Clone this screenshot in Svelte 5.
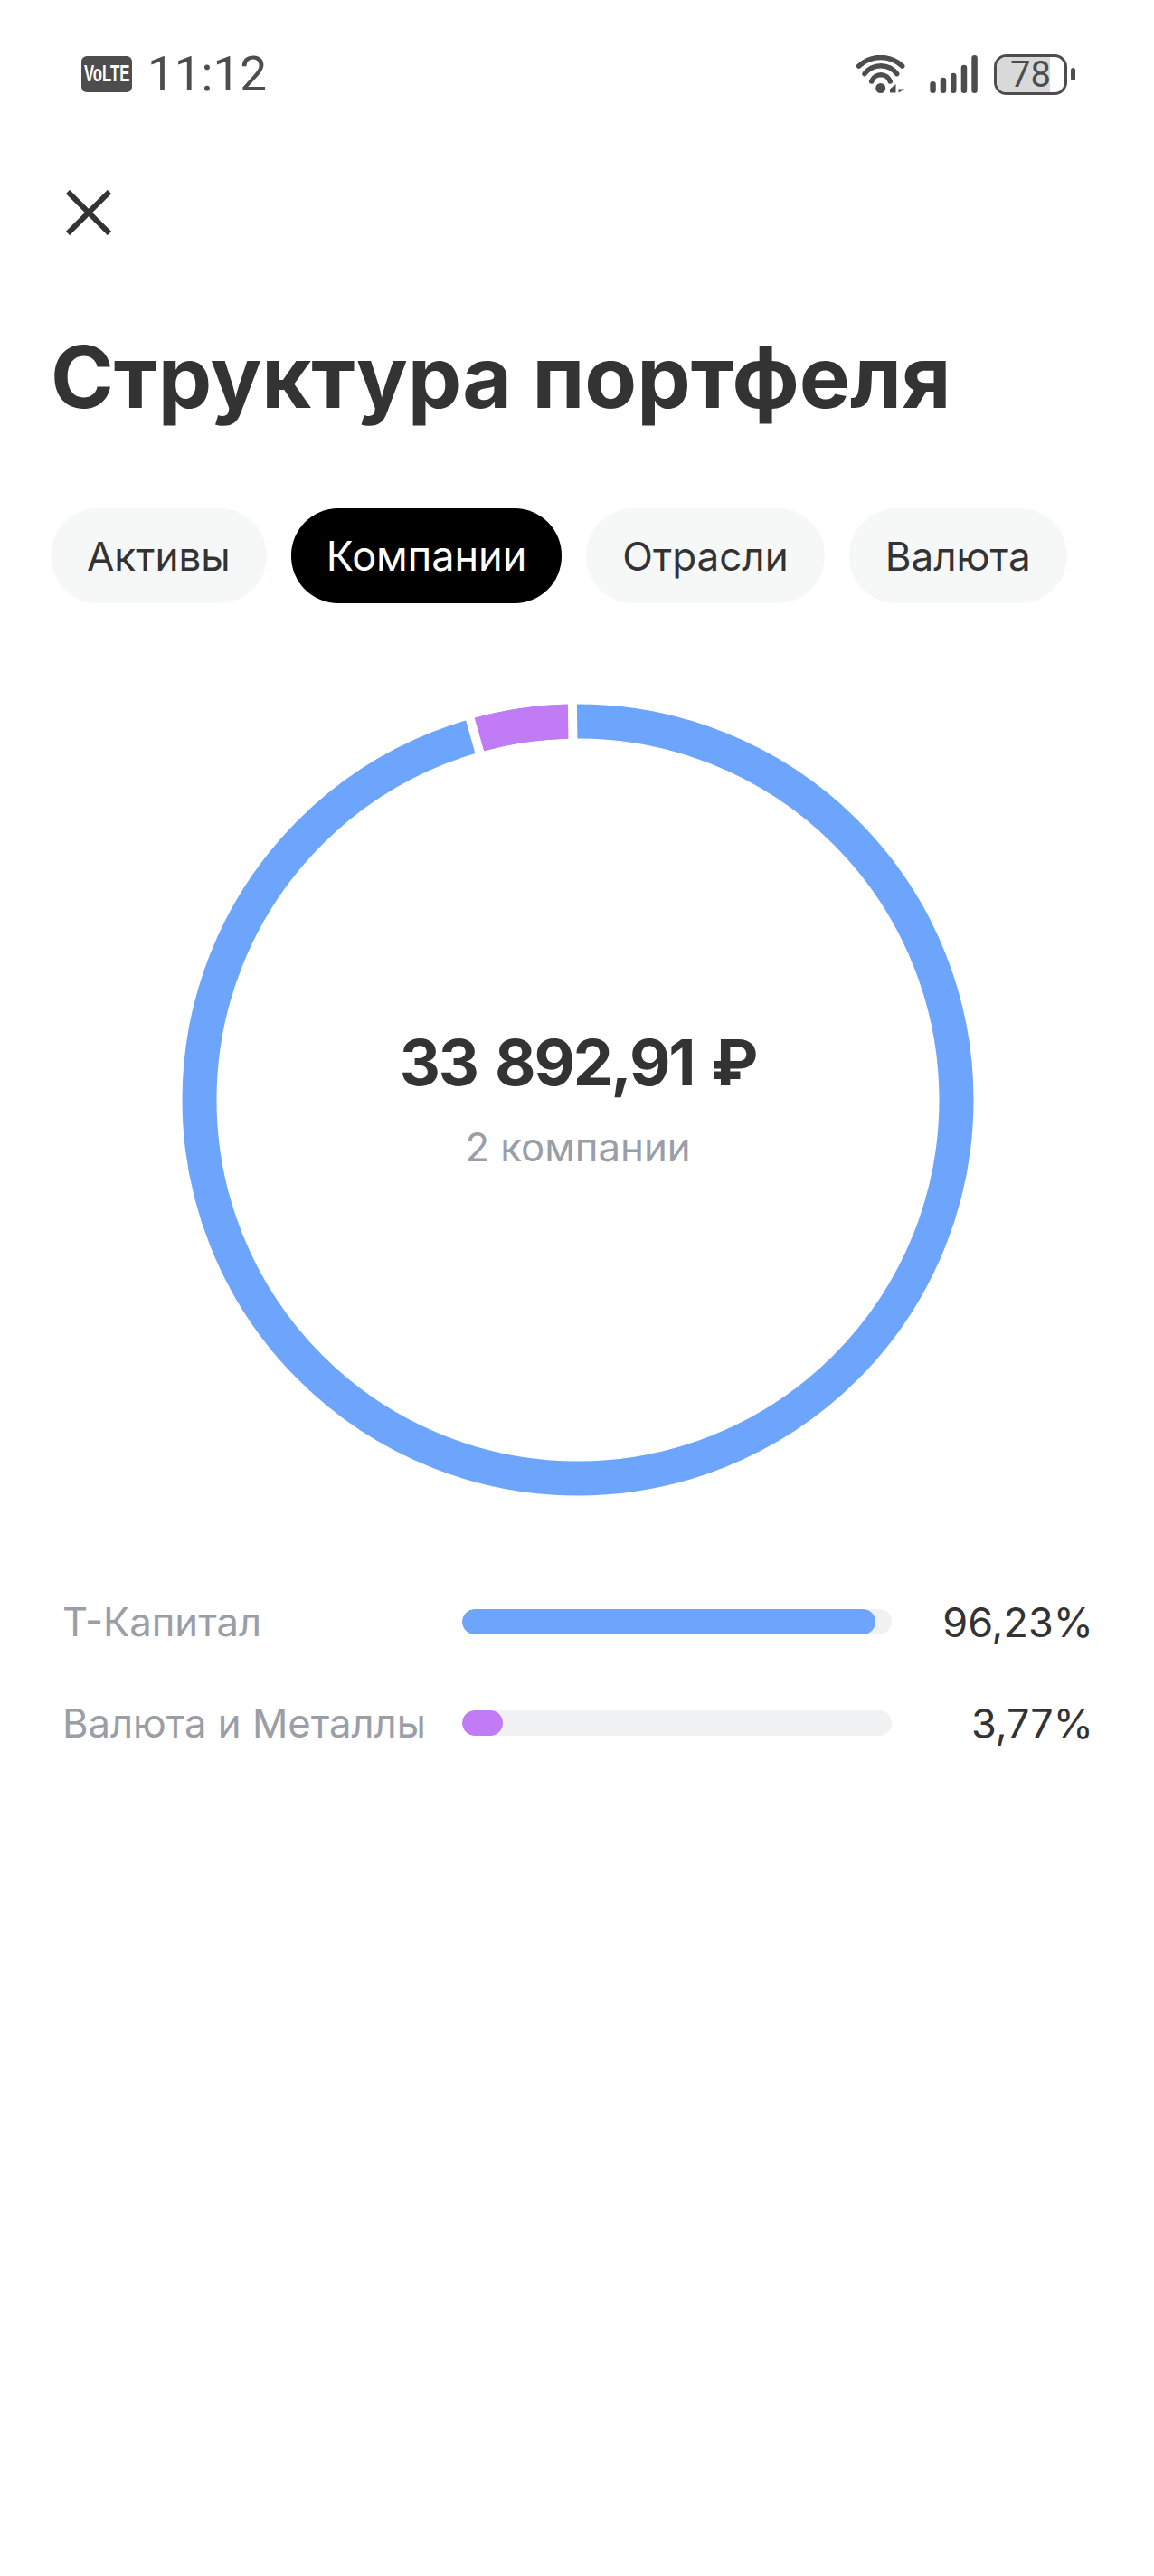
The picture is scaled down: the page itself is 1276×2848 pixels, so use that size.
<script lang="ts">
  const tabs = ['Активы', 'Компании', 'Отрасли', 'Валюта'];
  let active = $state('Компании');

  const rows = [
    { name: 'Т-Капитал', value: '96,23%', share: 96.23, color: '#6ca5fb' },
    { name: 'Валюта и Металлы', value: '3,77%', share: 3.77, color: '#c07bf5' }
  ];

  const bars = [
    [0.3, 29, 6.5],
    [11.7, 24.7, 6.5],
    [23, 19.7, 6.5],
    [34.7, 10.7, 6.5],
    [46.3, 0, 6.5]
  ];

  // ring geometry, angles run counter clockwise from the top
  const cx = 450;
  const cy = 450;
  const r = 418.5;
  const cuts = [0.8, 15.8];

  function point(deg: number, radius: number) {
    const a = (deg * Math.PI) / 180;
    return [cx - radius * Math.sin(a), cy - radius * Math.cos(a)];
  }

  const [ax, ay] = point(cuts[1], r);
  const [bx, by] = point(cuts[0], r);
  const purpleArc = `M${ax} ${ay} A${r} ${r} 0 0 1 ${bx} ${by}`;
  const separators = cuts.map((deg) => {
    const [x1, y1] = point(deg, r - 30);
    const [x2, y2] = point(deg, r + 30);
    return { x1, y1, x2, y2 };
  });
</script>

<main class="page">
  <header class="status">
    <div class="status-left">
      <div class="volte"><span>VoLTE</span></div>
      <span class="time">11:12</span>
    </div>
    <div class="status-right">
      <svg width="54" height="42" viewBox="0 0 54 42" fill="none" aria-hidden="true">
        <g stroke="#4d4d4d" stroke-width="5.5" stroke-linecap="round">
          <path d="M2.7 12A35 35 0 0 1 50.7 12" />
          <path d="M9 20.7A22.2 22.2 0 0 1 44.7 20.7" />
          <path d="M16.7 29A10.9 10.9 0 0 1 37.3 29" />
        </g>
        <circle cx="26.7" cy="36.5" r="5.5" fill="#4d4d4d" />
        <path d="M37 37.5L43.5 32V41.5H37ZM46.5 32V41.5L53.5 37.5H46.5Z" fill="#4d4d4d" />
      </svg>
      <svg class="signal" width="53" height="42" viewBox="0 0 53 42" aria-hidden="true">
        {#each bars as [x, y, w]}
          <rect {x} {y} width={w} height={42 - y} rx="3.2" fill="#4d4d4d" />
        {/each}
      </svg>
      <div class="battery">
        <div class="battery-body">
          <div class="battery-fill"></div>
          <span class="battery-text">78</span>
        </div>
        <div class="battery-nub"></div>
      </div>
    </div>
  </header>

  <button class="close" aria-label="Закрыть">
    <svg width="50" height="50" viewBox="0 0 50 50" fill="none" aria-hidden="true">
      <path d="M2 2L48 48M48 2L2 48" stroke="#333" stroke-width="6" />
    </svg>
  </button>

  <h1>Структура портфеля</h1>

  <nav class="tabs">
    {#each tabs as tab}
      <button class="tab" class:active={active === tab} onclick={() => (active = tab)}>{tab}</button>
    {/each}
  </nav>

  <section class="chart">
    <svg width="900" height="900" viewBox="0 0 900 900" fill="none" aria-hidden="true">
      <circle {cx} {cy} {r} stroke="#6ca5fb" stroke-width="38" />
      <path d={purpleArc} stroke="#c07bf5" stroke-width="38" />
      {#each separators as s}
        <line x1={s.x1} y1={s.y1} x2={s.x2} y2={s.y2} stroke="#fff" stroke-width="10" />
      {/each}
    </svg>
    <div class="chart-label">
      <div class="amount">33 892,91 ₽</div>
      <div class="count">2 компании</div>
    </div>
  </section>

  <section class="legend">
    {#each rows as row}
      <div class="row">
        <span class="name">{row.name}</span>
        <div class="track">
          <div class="fill" style="width: {row.share}%; background: {row.color}"></div>
        </div>
        <span class="value">{row.value}</span>
      </div>
    {/each}
  </section>
</main>

<style>
  :global(body) {
    margin: 0;
    background: #fff;
  }

  .page {
    width: 1276px;
    min-height: 2848px;
    background: #fff;
    color: #333;
    font-family: Inter, Roboto, sans-serif;
  }

  .status {
    display: flex;
    justify-content: space-between;
    align-items: center;
    height: 42px;
    padding: 61px 87px 0 90px;
  }
  .status-left {
    display: flex;
    align-items: center;
    gap: 17px;
  }
  .status-right {
    display: flex;
    align-items: center;
  }
  .signal {
    margin-left: 27px;
  }
  .volte {
    display: flex;
    align-items: center;
    justify-content: center;
    width: 56px;
    height: 40px;
    border-radius: 6px;
    background: #4d4d4d;
  }
  .volte span {
    font-family: 'Liberation Sans', sans-serif;
    font-size: 18px;
    line-height: 20px;
    font-weight: 700;
    color: #fff;
    transform: scale(0.93, 1.4);
  }
  .time {
    font-family: Roboto, sans-serif;
    font-size: 53px;
    line-height: 42px;
    color: #4d4d4d;
  }

  .battery {
    display: flex;
    align-items: center;
    gap: 4px;
    margin-left: 18px;
  }
  .battery-body {
    position: relative;
    box-sizing: border-box;
    width: 81px;
    height: 45px;
    border: 3px solid #4d4d4d;
    border-radius: 14px;
    overflow: hidden;
    display: flex;
    align-items: center;
    justify-content: center;
  }
  .battery-fill {
    position: absolute;
    left: 0;
    top: 0;
    bottom: 0;
    width: 78%;
    background: #d9d9d9;
  }
  .battery-text {
    position: relative;
    font-family: Roboto, sans-serif;
    font-size: 40px;
    line-height: 39px;
    color: #4d4d4d;
  }
  .battery-nub {
    width: 5px;
    height: 14px;
    border-radius: 3px;
    background: #4d4d4d;
  }

  .close {
    display: block;
    margin: 107px 0 0 73px;
    padding: 0;
    border: 0;
    background: none;
    line-height: 0;
  }

  h1 {
    margin: 99px 0 0 56px;
    font-size: 94.4px;
    line-height: 116px;
    font-weight: 700;
    letter-spacing: 0;
    color: #333;
  }

  .tabs {
    display: flex;
    gap: 27px;
    margin: 87px 0 0 56px;
  }
  .tab {
    height: 105px;
    padding: 0 40px;
    border: 0;
    border-radius: 52px;
    background: #f6f8f8;
    color: #333;
    font-family: inherit;
    font-size: 44px;
  }
  .tab.active {
    padding: 0 39px;
    background: #000;
    color: #fff;
    font-size: 45px;
  }

  .chart {
    position: relative;
    width: 900px;
    height: 900px;
    margin: 99px 0 0 189px;
  }
  .chart svg {
    display: block;
  }
  .chart-label {
    position: absolute;
    inset: 0;
    display: flex;
    flex-direction: column;
    align-items: center;
    justify-content: center;
    padding-bottom: 6px;
  }
  .amount {
    font-size: 70px;
    line-height: 88px;
    font-weight: 700;
    letter-spacing: -2.2px;
    word-spacing: 5px;
  }
  .count {
    margin-top: 23px;
    font-size: 43.7px;
    line-height: 54px;
    color: #9a9ea6;
  }

  .legend {
    display: flex;
    flex-direction: column;
    gap: 56px;
    margin: 99px 67px 0 69px;
  }
  .row {
    display: grid;
    grid-template-columns: 442px 475px 1fr;
    align-items: center;
    height: 56px;
  }
  .name {
    font-size: 43.6px;
    color: #9a9ea6;
    white-space: nowrap;
  }
  .track {
    height: 28px;
    border-radius: 14px;
    background: #eff1f3;
    overflow: hidden;
  }
  .fill {
    height: 100%;
    min-width: 45px;
    border-radius: 14px;
  }
  .value {
    font-size: 45px;
    text-align: right;
    color: #333;
  }
</style>
